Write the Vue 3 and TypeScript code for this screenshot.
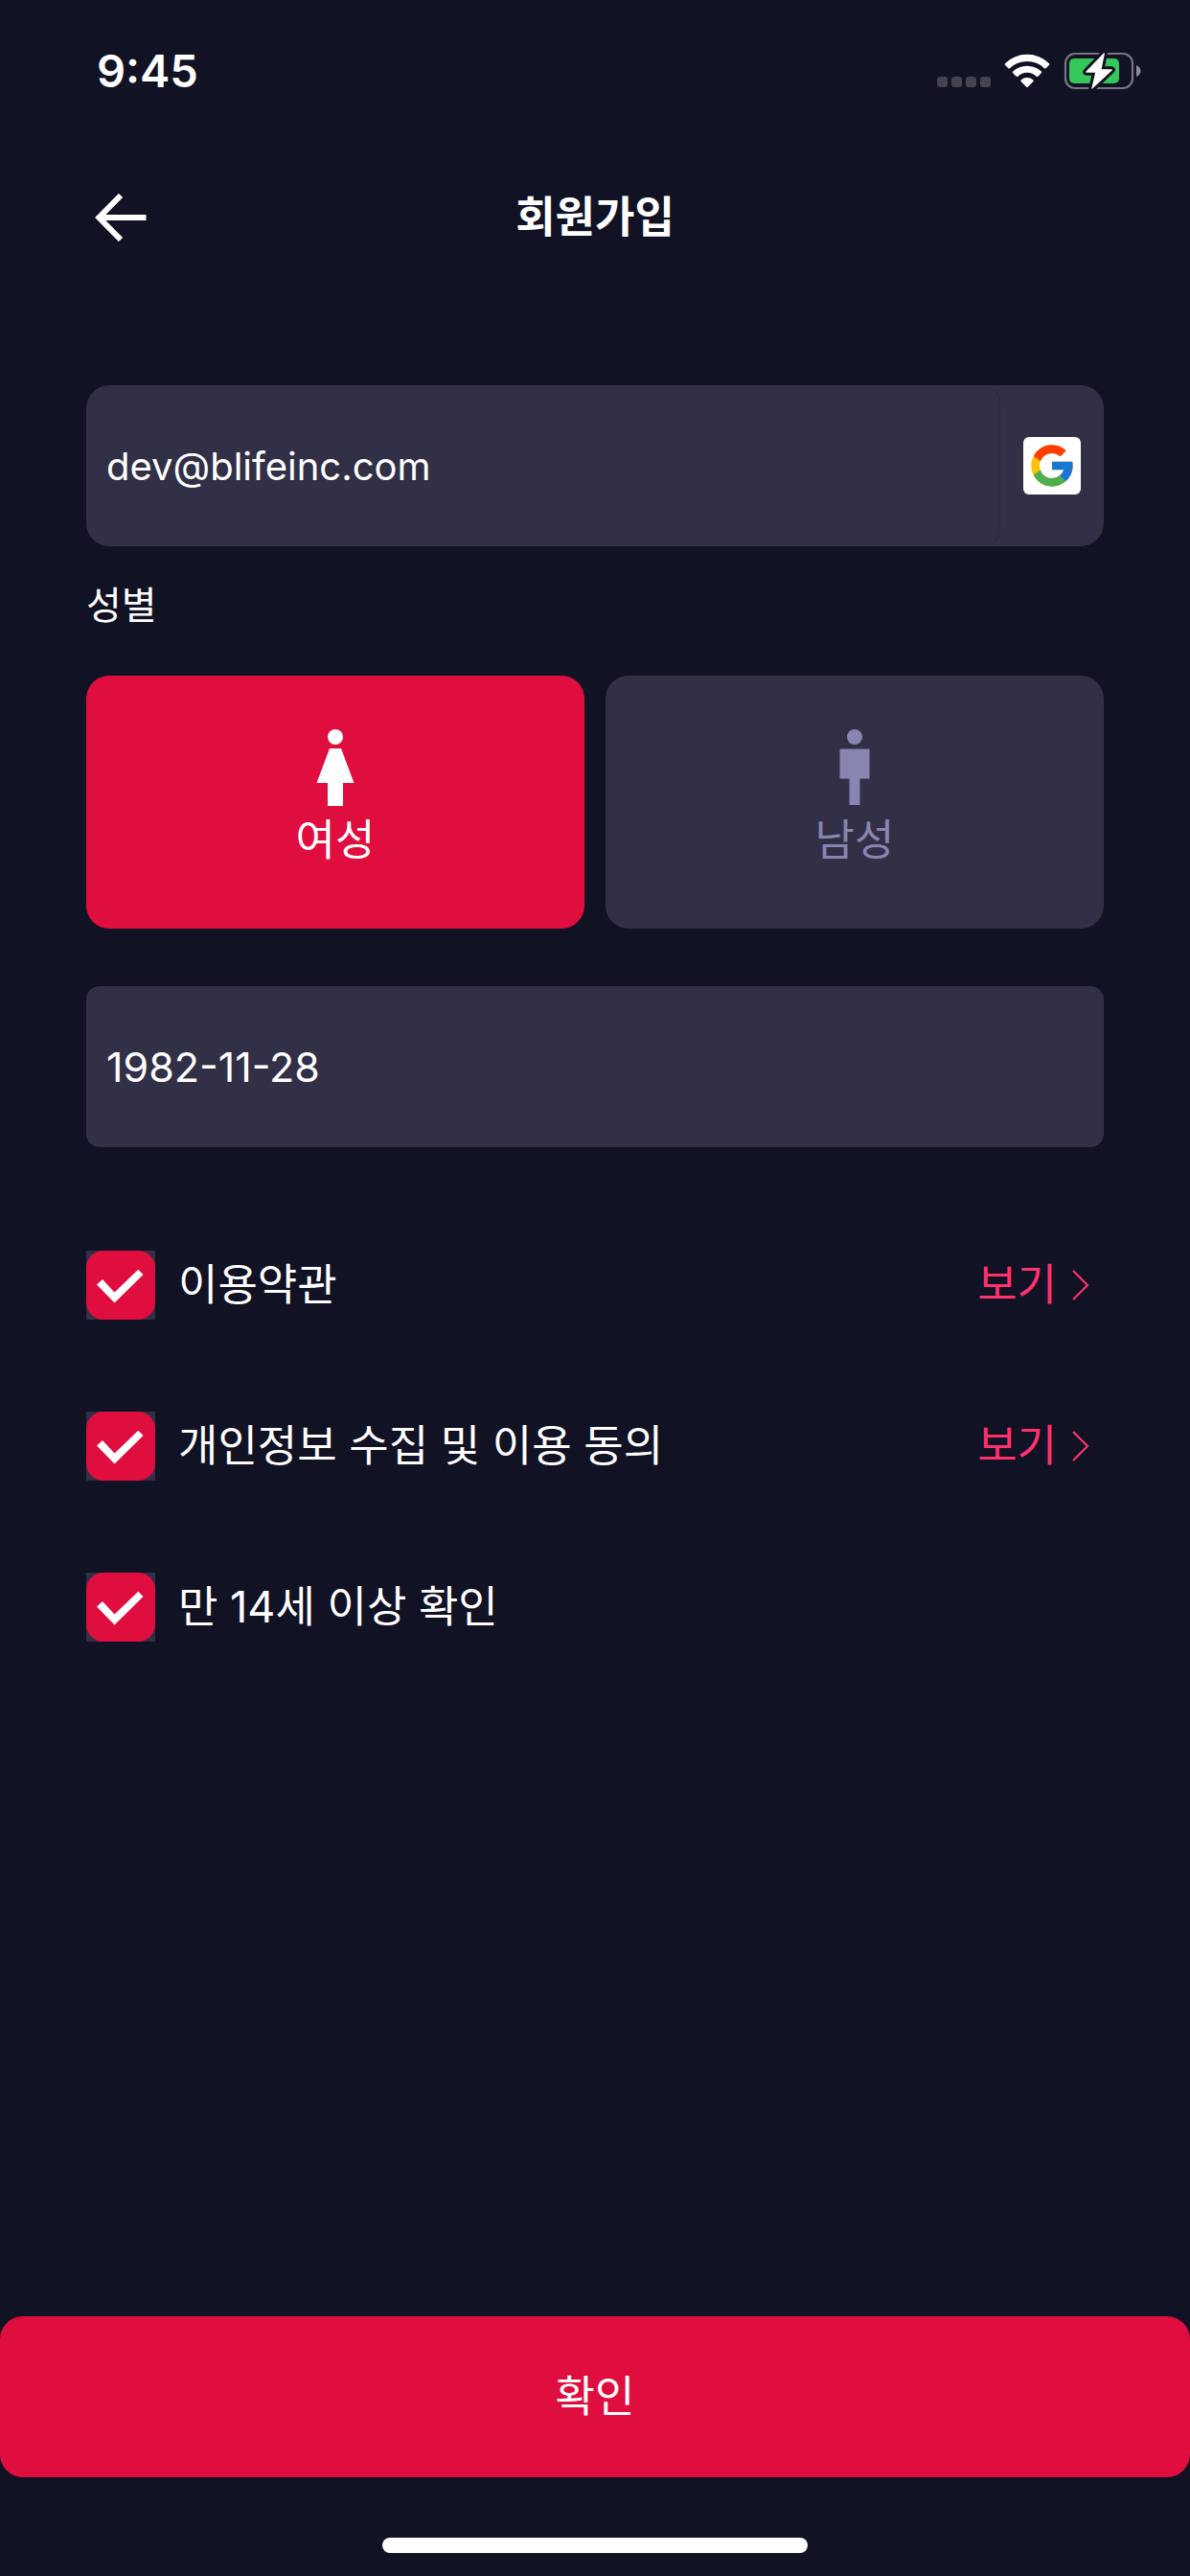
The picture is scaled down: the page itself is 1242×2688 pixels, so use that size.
<script setup lang="ts">
import { ref } from 'vue'

type Gender = 'female' | 'male'

interface Agreement {
  id: string
  label: string
  href?: string
  checked: boolean
}

const email = ref('dev@blifeinc.com')
const birthday = ref('1982-11-28')
const gender = ref<Gender>('female')

const agreements = ref<Agreement[]>([
  { id: 'terms', label: '이용약관', href: '#terms', checked: true },
  { id: 'privacy', label: '개인정보 수집 및 이용 동의', href: '#privacy', checked: true },
  { id: 'age', label: '만 14세 이상 확인', checked: true },
])
</script>

<template>
  <div class="screen">
    <div class="status">
      <span class="time">9:45</span>
      <div class="indicators">
        <svg class="cell" width="56" height="11" viewBox="0 0 56 11" aria-hidden="true">
          <rect v-for="n in 4" :key="n" :x="(n - 1) * 15" y="0" width="11" height="11" rx="3" fill="#454352" />
        </svg>
        <svg width="48" height="38" viewBox="0 0 48 38" fill="#fff" aria-hidden="true">
          <path d="M1 11.2a33 33 0 0 1 46 0q.8.8 0 1.600l-3.400 3.400q-.8.700-1.600 0a26 26 0 0 0-36 0q-.8.700-1.600 0L1 12.800q-.8-.8 0-1.600z" />
          <path d="M9.200 19.600a21.500 21.500 0 0 1 29.600 0q.8.8 0 1.600l-3.500 3.500q-.8.700-1.600 0a14 14 0 0 0-19.400 0q-.8.700-1.600 0l-3.500-3.500q-.8-.8 0-1.600z" />
          <path d="M17.600 28.400a9.500 9.500 0 0 1 12.800 0q.8.8 0 1.600l-5.600 5.700q-.8.700-1.600 0L17.600 30q-.8-.8 0-1.600z" />
        </svg>
        <svg class="battery" width="82" height="42" viewBox="0 0 82 42" aria-hidden="true">
          <rect x="2" y="3" width="70" height="36" rx="10" fill="none" stroke="#767582" stroke-width="2.200" />
          <path d="M76 15q4.500 2 4.500 6T76 27z" fill="#8b8a95" />
          <rect x="6" y="8" width="52" height="26" rx="5" fill="#34c759" />
          <path d="M41.800 2.500 23.500 21.500q-.9 1.200.6 1.200h9l-3.800 16.500q-.2 1.200.8.400L50.600 20.400q.9-1.200-.6-1.200H39.600L42.900 3q.1-1.200-1.100-.5z" fill="#fff" stroke="#111224" stroke-width="6" stroke-linejoin="round" paint-order="stroke" />
        </svg>
      </div>
    </div>

    <header class="topbar">
      <button class="back" type="button" aria-label="뒤로">
        <svg width="54" height="50" viewBox="0 0 54 50" fill="none" stroke="#fff" stroke-width="6" aria-hidden="true">
          <path d="M4 25H53.500" />
          <path d="M27 2 4.300 25 27 48" />
        </svg>
      </button>
      <h1>회원가입</h1>
    </header>

    <form class="form" @submit.prevent>
      <div class="email">
        <input v-model="email" class="email-input" type="email" aria-label="이메일" readonly />
        <span class="provider">
          <svg width="52" height="52" viewBox="0 0 48 48" aria-hidden="true">
            <path fill="#ffc107" d="M43.611 20.083H42V20H24v8h11.303c-1.649 4.657-6.080 8-11.303 8-6.627 0-12-5.373-12-12s5.373-12 12-12c3.059 0 5.842 1.154 7.961 3.039l5.657-5.657C34.046 6.053 29.268 4 24 4 12.955 4 4 12.955 4 24s8.955 20 20 20 20-8.955 20-20c0-1.341-.138-2.650-.389-3.917z" />
            <path fill="#ff3d00" d="m6.306 14.691 6.571 4.819C14.655 15.108 18.961 12 24 12c3.059 0 5.842 1.154 7.961 3.039l5.657-5.657C34.046 6.053 29.268 4 24 4 16.318 4 9.656 8.337 6.306 14.691z" />
            <path fill="#4caf50" d="M24 44c5.166 0 9.860-1.977 13.409-5.192l-6.190-5.238A11.910 11.910 0 0 1 24 36c-5.202 0-9.619-3.317-11.283-7.946l-6.522 5.025C9.505 39.556 16.227 44 24 44z" />
            <path fill="#1976d2" d="M43.611 20.083H42V20H24v8h11.303a12.040 12.040 0 0 1-4.087 5.571l.003-.002 6.190 5.238C36.971 39.205 44 34 44 24c0-1.341-.138-2.650-.389-3.917z" />
          </svg>
        </span>
      </div>

      <fieldset class="gender">
        <legend>성별</legend>
        <div class="cards">
          <label class="card" :class="{ selected: gender === 'female' }">
            <input v-model="gender" type="radio" name="gender" value="female" />
            <svg width="40" height="80" viewBox="0 0 40 80" fill="currentColor" aria-hidden="true">
              <circle cx="20" cy="8" r="8" />
              <path d="M14 20h12l13.500 36H28v24H12V56H.5z" />
            </svg>
            <span>여성</span>
          </label>
          <label class="card" :class="{ selected: gender === 'male' }">
            <input v-model="gender" type="radio" name="gender" value="male" />
            <svg width="40" height="80" viewBox="0 0 40 80" fill="currentColor" aria-hidden="true">
              <circle cx="20" cy="8" r="8" />
              <path d="M4.500 20.500h31v31H25.500V79h-11V51.500h-10z" />
            </svg>
            <span>남성</span>
          </label>
        </div>
      </fieldset>

      <input v-model="birthday" class="birthday" type="text" aria-label="생년월일" readonly />

      <ul class="agreements">
        <li v-for="item in agreements" :key="item.id">
          <label class="agree" :for="item.id">
            <span class="box">
              <input :id="item.id" v-model="item.checked" type="checkbox" />
              <svg v-if="item.checked" width="72" height="72" viewBox="0 0 72 72" aria-hidden="true">
                <path d="M11 35.500 17 30l12.500 13.500 24.800-23.800 5.200 5.300-30 29.500z" fill="#fff" />
              </svg>
            </span>
            <span>{{ item.label }}</span>
          </label>
          <a v-if="item.href" class="view" :href="item.href">
            보기
            <svg width="18" height="32" viewBox="0 0 18 32" fill="none" stroke="currentColor" stroke-width="2.200" aria-hidden="true">
              <path d="M1 1 16 16 1 31" />
            </svg>
          </a>
        </li>
      </ul>

      <button class="submit" type="submit">확인</button>
    </form>

    <div class="home"></div>
  </div>
</template>

<style>
html,
body {
  background: #111224;
}
</style>

<style scoped>
* {
  box-sizing: border-box;
}

.screen {
  display: flex;
  flex-direction: column;
  min-height: 100vh;
  background: #111224;
  color: #fff;
  font-family: Inter, 'Noto Sans CJK KR', sans-serif;
  font-size: 45px;
  line-height: 60px;
}

input,
button {
  font: inherit;
  color: inherit;
  border: 0;
  margin: 0;
}

.status {
  display: flex;
  align-items: center;
  justify-content: space-between;
  height: 148px;
  padding: 0 50px 0 101px;
}

.time {
  font-size: 47px;
  font-weight: 600;
}

.indicators {
  display: flex;
  align-items: center;
  gap: 14px;
}

.cell {
  align-self: flex-end;
  margin-bottom: 4px;
}

.topbar {
  display: grid;
  grid-template-columns: 1fr auto 1fr;
  align-items: center;
  height: 158px;
  padding: 0 99px;
}

.back {
  display: flex;
  width: 54px;
  padding: 0;
  background: none;
}

h1 {
  margin: 0;
  font-size: 45px;
  font-weight: 600;
}

.form {
  display: flex;
  flex: 1;
  flex-direction: column;
  padding-top: 96px;
}

.email {
  display: flex;
  align-items: center;
  gap: 24px;
  height: 168px;
  margin: 0 90px;
  padding-right: 24px;
  border-radius: 24px;
  background: #313047;
}

.email-input {
  flex: 1;
  min-width: 0;
  height: 168px;
  padding: 0 20px;
  border: 1px solid transparent;
  border-right-color: #2a293e;
  border-radius: 18px;
  background: transparent;
  font-size: 40px;
}

.provider {
  display: flex;
  align-items: center;
  justify-content: center;
  width: 60px;
  height: 60px;
  border-radius: 6px;
  background: #fff;
}

.gender {
  min-width: 0;
  margin: 32px 90px 0;
  padding: 0;
  border: 0;
}

legend {
  padding: 0;
  font-size: 40px;
}

.cards {
  display: grid;
  grid-template-columns: 1fr 1fr;
  gap: 22px;
  margin-top: 43px;
}

.card {
  display: flex;
  flex-direction: column;
  align-items: center;
  height: 264px;
  padding-top: 56px;
  border-radius: 24px;
  background: #313047;
  color: #8885b0;
}

.card.selected {
  background: #e00d3f;
  color: #fff;
}

.card svg {
  margin-bottom: 6px;
}

.card input {
  position: absolute;
  opacity: 0;
  pointer-events: none;
}

.birthday {
  height: 168px;
  margin: 60px 90px 0;
  padding: 0 21px;
  border-radius: 14px;
  background: #313047;
  font-size: 43px;
}

.agreements {
  display: flex;
  flex-direction: column;
  gap: 96px;
  margin: 108px 90px 0;
  padding: 0;
  list-style: none;
}

.agreements li {
  display: flex;
  align-items: center;
  justify-content: space-between;
}

.agree {
  display: flex;
  align-items: center;
  gap: 24px;
}

.box {
  display: grid;
  background: #313047;
}

.box > * {
  grid-area: 1 / 1;
}

.box input {
  appearance: none;
  width: 72px;
  height: 72px;
  border-radius: 18px;
}

.box input:checked {
  background: #e00d3f;
}

.view {
  display: flex;
  align-items: center;
  gap: 16px;
  padding-right: 15px;
  color: #ff316f;
  text-decoration: none;
}

.submit {
  height: 168px;
  margin-top: auto;
  border-radius: 24px;
  background: #e00d3f;
}

.home {
  align-self: center;
  width: 444px;
  height: 16px;
  margin: 63px 0 24px;
  border-radius: 8px;
  background: #fff;
}
</style>
